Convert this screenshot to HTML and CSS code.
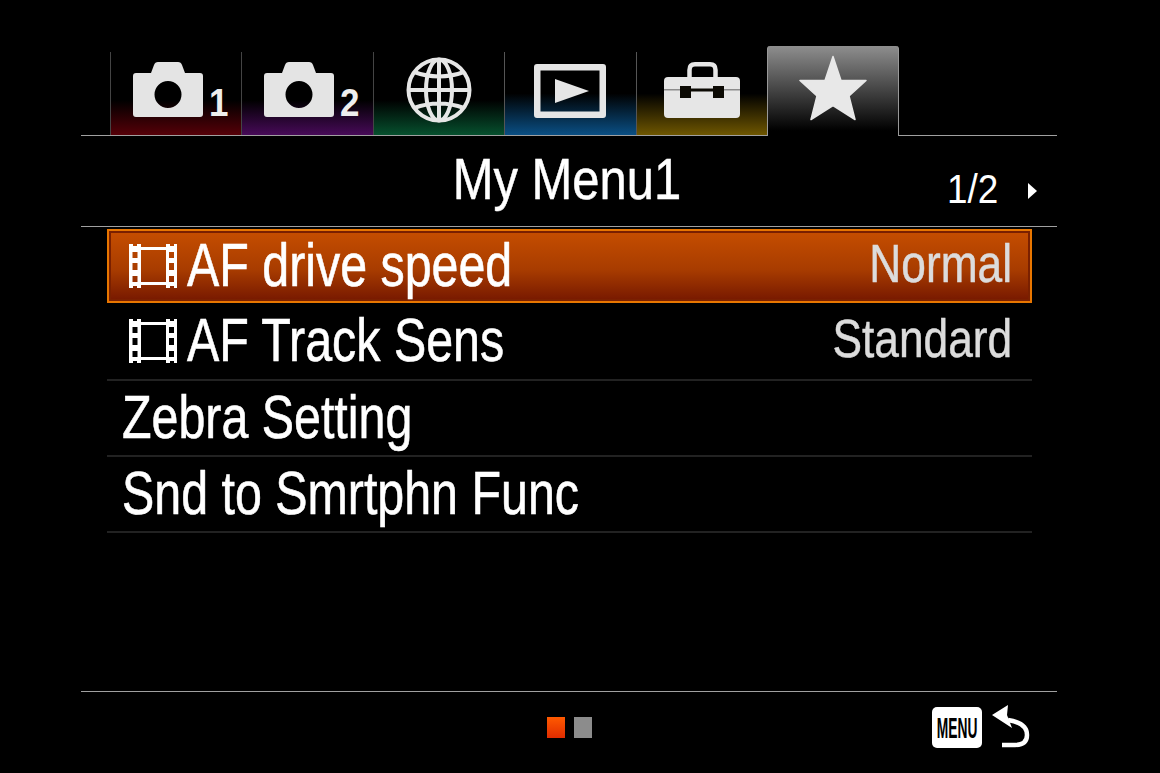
FILE: index.html
```html
<!DOCTYPE html>
<html>
<head>
  <meta charset="UTF-8">
  <title>My Menu1</title>
  <link rel="stylesheet" href="styles.css">
</head>
<body>
  <svg class="defs" width="0" height="0">
    <defs>
      <symbol id="camera" viewBox="0 0 70 55">
        <path fill-rule="evenodd" d="M3 11H18L21 3Q22 0 25 0H45Q48 0 49 3L52 11H67Q70 11 70 14V52Q70 55 67 55H3Q0 55 0 52V14Q0 11 3 11ZM35 19A13.500 13.500 0 1 0 35 46A13.500 13.500 0 1 0 35 19Z"/>
      </symbol>
      <symbol id="film" viewBox="0 0 48 46">
        <path fill-rule="evenodd" d="M0 1H4V3H8V1H12V4H37V1H41V3H45V1H48V45H45V43H41V45H37V42H12V45H8V43H4V45H0ZM12 7V39H37V7ZM3.500 9V15H8.500V9ZM40 9V15H45V9ZM3.500 20V27H8.500V20ZM40 20V27H45V20ZM3.500 33V39H8.500V33ZM40 33V39H45V33Z"/>
      </symbol>
    </defs>
  </svg>

  <div class="screen">
    <div class="tabs">
      <div class="tab tab-red">
        <svg class="icon-camera"><use href="#camera"/></svg>
        <span class="tab-num">1</span>
      </div>
      <div class="tab tab-purple">
        <svg class="icon-camera"><use href="#camera"/></svg>
        <span class="tab-num">2</span>
      </div>
      <div class="tab tab-green tab-center">
        <svg class="icon-globe" viewBox="0 0 66 66">
          <g fill="none" stroke="#e6e6e6" stroke-width="4">
            <circle cx="33" cy="33" r="30.500"/>
            <ellipse cx="33" cy="33" rx="13" ry="30.500"/>
            <path d="M33 2.500V63.500M2.500 33H63.500M8 15Q33 24 58 15M8 51Q33 42 58 51"/>
          </g>
        </svg>
      </div>
      <div class="tab tab-blue tab-center">
        <svg class="icon-play" viewBox="0 0 72 54">
          <path fill="#e6e6e6" fill-rule="evenodd" d="M3 0H69Q72 0 72 3V51Q72 54 69 54H3Q0 54 0 51V3Q0 0 3 0ZM6.500 6.500V47.500H65.500V6.500Z"/>
          <path fill="#e6e6e6" d="M21 15L55 27L21 39Z"/>
        </svg>
      </div>
      <div class="tab tab-yellow tab-center">
        <svg class="icon-box" viewBox="0 0 76 56">
          <path fill="none" stroke="#e6e6e6" stroke-width="4.500" d="M25.500 16V8Q25.500 2.300 31 2.300H46Q51.500 2.300 51.500 8V16"/>
          <path fill="#e6e6e6" d="M4 15H72Q76 15 76 19V52Q76 56 72 56H4Q0 56 0 52V19Q0 15 4 15Z"/>
          <path fill="#0c0a04" d="M16 24H27V36H16ZM49 24H60V36H49ZM27 26.500H49V29.500H27Z"/>
          <path fill="#8c8c8c" d="M0 27H16V28.500H0ZM60 27H76V28.500H60Z"/>
        </svg>
      </div>
      <div class="tab tab-active tab-center">
        <svg class="icon-star" viewBox="0 0 68 66">
          <path fill="#e8e8e8" stroke="#e8e8e8" stroke-width="1.500" stroke-linejoin="round" d="M34 1.500L42 25.500H67L50 41L56 64.500L34 50.500L12 64.500L18 41L1 25.500H26Z"/>
        </svg>
      </div>
    </div>

    <div class="title-row">
      <div class="title">My Menu1</div>
      <div class="page-no">1/2</div>
      <div class="page-arrow"></div>
    </div>

    <div class="list">
      <div class="row row-selected">
        <svg class="icon-film"><use href="#film"/></svg>
        <span class="row-label">AF drive speed</span>
        <span class="row-value">Normal</span>
      </div>
      <div class="row">
        <svg class="icon-film"><use href="#film"/></svg>
        <span class="row-label">AF Track Sens</span>
        <span class="row-value">Standard</span>
      </div>
      <div class="row">
        <span class="row-label plain">Zebra Setting</span>
      </div>
      <div class="row">
        <span class="row-label plain">Snd to Smrtphn Func</span>
      </div>
    </div>

    <div class="footer">
      <div class="pager">
        <span class="dot dot-on"></span>
        <span class="dot"></span>
      </div>
      <div class="back">
        <div class="menu-key"><span class="menu-text">MENU</span></div>
        <svg class="icon-back" viewBox="0 0 38 44">
          <path fill="none" stroke="#fff" stroke-width="4.500" d="M16 15Q35 18 35 30Q35 40 23 40H10"/>
          <path fill="#fff" d="M0 10L16 0L15 10L20 23Z"/>
        </svg>
      </div>
    </div>
  </div>
</body>
</html>
```

FILE: styles.css
```css
:root {
  --line: #a0a0a0;
  --text-white: #ffffff;
  --text-light: #dcdcdc;
  --row-line: #222222;
}

html, body {
  margin: 0;
  background: #000;
}

body {
  width: 1160px;
  height: 773px;
  overflow: hidden;
  color: var(--text-white);
  font-family: 'Liberation Sans', Arial, sans-serif;
}

.defs {
  display: block;
}

.screen {
  width: 976px;
  margin-left: 81px;
  padding-top: 46px;
}

/* tabs */
.tabs {
  display: flex;
  align-items: flex-end;
  height: 89px;
  padding-left: 29px;
  border-bottom: 1px solid var(--line);
}

.tab {
  display: flex;
  align-items: flex-start;
  box-sizing: border-box;
  width: 131.4px;
  height: 83px;
  padding-left: 22px;
  border-left: 1px solid #444;
}

.tab-center {
  justify-content: center;
  padding-left: 0;
}

.tab-red { background: linear-gradient(#000 58%, #560008); }
.tab-purple { background: linear-gradient(#000 58%, #470a58); }
.tab-green { background: linear-gradient(#000 58%, #06502e); }
.tab-blue { background: linear-gradient(#000 50%, #0a4f84); }
.tab-yellow { background: linear-gradient(#000 50%, #6e5600); }

.tab-blue, .tab-yellow {
  border-left-color: #555;
}

.tab-active {
  width: 132px;
  height: 90px;
  margin-bottom: -1px;
  border: 1px solid #999;
  border-top: none;
  border-bottom: none;
  border-radius: 3px 3px 0 0;
  background: linear-gradient(#8e8e8e, #000 94%);
}

.icon-camera {
  flex: none;
  width: 70px;
  height: 55px;
  margin-top: 10px;
  fill: #e4e4e4;
}

.tab-num {
  margin: 32px 0 0 6px;
  font-size: 38px;
  font-weight: 700;
  line-height: 38px;
  color: #eee;
  transform: scaleX(0.92);
  transform-origin: left;
}

.icon-globe {
  width: 66px;
  height: 66px;
  margin-top: 5px;
}

.icon-play {
  width: 72px;
  height: 54px;
  margin-top: 12px;
}

.icon-box {
  width: 76px;
  height: 56px;
  margin-top: 10px;
}

.icon-star {
  width: 68px;
  height: 66px;
  margin-top: 9px;
}

/* title */
.title-row {
  display: flex;
  align-items: center;
  height: 90px;
  border-bottom: 1px solid var(--line);
}

.title {
  width: 972px;
  margin: 0 -972px 5px 0;
  font-size: 57px;
  line-height: 82px;
  text-align: center;
  transform: scaleX(0.858);
  -webkit-text-stroke: 0.5px #fff;
}

.page-no {
  margin: 16px 0 0 866px;
  font-size: 41px;
  line-height: 44px;
  transform: scaleX(0.9);
  transform-origin: left;
}

.page-arrow {
  width: 0;
  height: 0;
  margin: 20px 0 0 24px;
  border-left: 9px solid #fff;
  border-top: 8px solid transparent;
  border-bottom: 8px solid transparent;
}

/* list */
.list {
  width: 925px;
  height: 462px;
  margin: 2px 0 0 26px;
}

.row {
  display: flex;
  align-items: center;
  box-sizing: border-box;
  height: 76px;
  padding: 0 20px 0 22px;
  border-bottom: 2px solid var(--row-line);
}

.row-selected {
  height: 74px;
  padding: 0 18px 0 20px;
  border: 2px solid #e87600;
  background: linear-gradient(#c64e00, #a83c00 55%, #761800);
  box-shadow: inset 0 0 0 2px #7a2000;
}

.row:nth-child(2) {
  height: 78px;
}

.icon-film {
  flex: none;
  width: 48px;
  height: 46px;
  margin-right: 10px;
  fill: #fff;
}

.row-label {
  margin-bottom: 2px;
  font-size: 62px;
  line-height: 70px;
  white-space: nowrap;
  transform: scaleX(0.78);
  transform-origin: left;
  -webkit-text-stroke: 0.6px #fff;
}

.row-label.plain {
  margin-left: -7px;
}

.row-value {
  margin: 0 0 6px auto;
  font-size: 54px;
  line-height: 64px;
  color: var(--text-light);
  transform: scaleX(0.82);
  transform-origin: right;
  -webkit-text-stroke: 0.5px var(--text-light);
}

/* footer */
.footer {
  display: flex;
  align-items: flex-start;
  height: 70px;
  border-top: 1px solid var(--line);
}

.pager {
  display: flex;
  gap: 9px;
  margin: 25px 0 0 466px;
}

.dot {
  width: 18px;
  height: 21px;
  background: #8c8c8c;
}

.dot-on {
  background: linear-gradient(#ff5a00, #e02c00);
}

.back {
  display: flex;
  align-items: flex-start;
  gap: 10px;
  margin: 15px 0 0 340px;
}

.menu-key {
  display: flex;
  align-items: center;
  justify-content: center;
  width: 50px;
  height: 41px;
  border-radius: 5px;
  background: #fff;
}

.menu-text {
  color: #000;
  font-size: 30px;
  font-weight: 700;
  line-height: 41px;
  transform: scaleX(0.46);
}

.icon-back {
  width: 38px;
  height: 44px;
  margin-top: -2px;
}
```
